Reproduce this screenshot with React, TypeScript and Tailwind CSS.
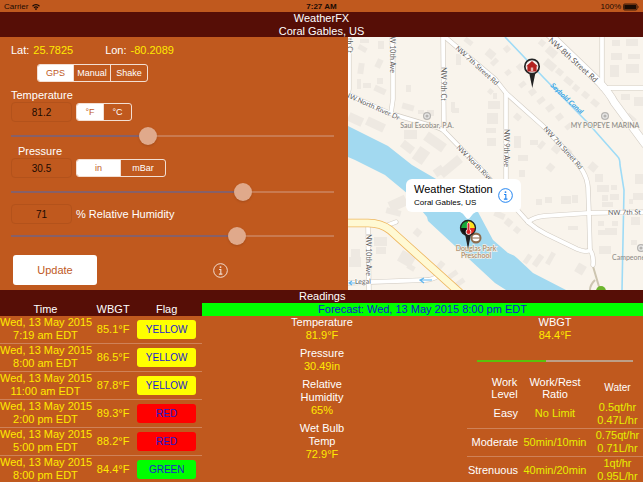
import { useState } from "react";
import { clsx } from "clsx";

type Flag = "YELLOW" | "RED" | "GREEN";

const forecasts: { time: string; wbgt: string; flag: Flag }[] = [
  { time: "7:19 am EDT", wbgt: "85.1°F", flag: "YELLOW" },
  { time: "8:00 am EDT", wbgt: "86.5°F", flag: "YELLOW" },
  { time: "11:00 am EDT", wbgt: "87.8°F", flag: "YELLOW" },
  { time: "2:00 pm EDT", wbgt: "89.3°F", flag: "RED" },
  { time: "5:00 pm EDT", wbgt: "88.2°F", flag: "RED" },
  { time: "8:00 pm EDT", wbgt: "84.4°F", flag: "GREEN" },
];

const flagColors: Record<Flag, string> = {
  YELLOW: "bg-[#ffff00]",
  RED: "bg-[#ff0000]",
  GREEN: "bg-[#00ff00]",
};

const readings = [
  { label: ["Temperature"], value: "81.9°F" },
  { label: ["Pressure"], value: "30.49in" },
  { label: ["Relative", "Humidity"], value: "65%" },
  { label: ["Wet Bulb", "Temp"], value: "72.9°F" },
];

const workLevels = [
  { level: "Easy", ratio: "No Limit", water: ["0.5qt/hr", "0.47L/hr"] },
  { level: "Moderate", ratio: "50min/10min", water: ["0.75qt/hr", "0.71L/hr"] },
  { level: "Strenuous", ratio: "40min/20min", water: ["1qt/hr", "0.95L/hr"] },
];

function StatusBar() {
  return (
    <div className="grid h-3 grid-cols-3 items-center px-1 pt-0.5 text-[8px] leading-[10px] text-[#1a0b04]">
      <div className="flex items-center gap-1">
        <span>Carrier</span>
        <svg className="h-2 w-2" viewBox="0 0 16 14" fill="none" stroke="currentColor" strokeWidth="2.4">
          <path d="M1 5.5C5 1.2 11 1.2 15 5.5" />
          <path d="M4 8.6C6.3 6.2 9.7 6.2 12 8.6" />
          <path d="M8 13.5L5.4 10.6Q8 8.8 10.6 10.6Z" fill="currentColor" stroke="none" />
        </svg>
      </div>
      <span className="text-center font-bold">7:27 AM</span>
      <div className="flex items-center justify-end gap-0.5">
        <span>100%</span>
        <svg className="h-2 w-4" viewBox="0 0 32 16">
          <rect x="1" y="2" width="27" height="12" rx="2.5" fill="none" stroke="currentColor" strokeWidth="1.5" />
          <rect x="2.5" y="3.5" width="24" height="9" fill="currentColor" />
          <path d="M29.5 5Q32.5 8 29.5 11Z" fill="currentColor" />
        </svg>
      </div>
    </div>
  );
}

function Segmented({ label, options, widths }: { label: string; options: string[]; widths: string[] }) {
  const [active, setActive] = useState(options[0]);
  return (
    <div role="group" aria-label={label} className="flex h-[18px] w-fit divide-x divide-[#f3dfd3] overflow-hidden rounded-[3px] border border-[#f3dfd3]">
      {options.map((option, i) => (
        <button
          key={option}
          type="button"
          aria-pressed={active === option}
          onClick={() => setActive(option)}
          className={clsx(
            "flex items-center justify-center text-[9px] leading-none",
            widths[i],
            active === option ? "bg-white text-[#c0591e]" : "text-white"
          )}
        >
          {option}
        </button>
      ))}
    </div>
  );
}

function NumberBox({ id, value }: { id: string; value: string }) {
  return (
    <input
      id={id}
      defaultValue={value}
      inputMode="decimal"
      className="h-5 w-[61px] rounded border border-[#b3521b] bg-transparent text-center text-[10px] text-[#1c0a02] outline-none"
    />
  );
}

function Slider({ label, start }: { label: string; start: number }) {
  const [value, setValue] = useState(start);
  return (
    <div className="relative flex h-5 items-center">
      <div className="flex h-0.5 w-full bg-[#c97a50]">
        <div className="bg-[#866068]" style={{ width: `${value}%` }} />
      </div>
      <input
        type="range"
        aria-label={label}
        min={0}
        max={100}
        value={value}
        onChange={(e) => setValue(Number(e.target.value))}
        className="absolute inset-0 w-full appearance-none bg-transparent [&::-webkit-slider-thumb]:size-[18px] [&::-webkit-slider-thumb]:appearance-none [&::-webkit-slider-thumb]:rounded-full [&::-webkit-slider-thumb]:bg-[#e0a98b] [&::-webkit-slider-thumb]:shadow"
      />
    </div>
  );
}

function InfoIcon({ className }: { className?: string }) {
  return (
    <svg className={className} viewBox="0 0 28 28" fill="none" stroke="currentColor">
      <circle cx="14" cy="14" r="12.8" strokeWidth="1.8" />
      <circle cx="14" cy="7.6" r="1.7" fill="currentColor" stroke="none" />
      <path d="M11.3 12H14.6V20.5M11 20.8H17.6" strokeWidth="2" />
    </svg>
  );
}

function Controls() {
  return (
    <section className="flex flex-col pt-1.5 pr-3.5 pb-[5px] pl-[11px]">
      <div className="flex gap-8 text-[11px] leading-[15px]">
        <p className="flex gap-1 text-white">
          Lat: <span className="text-[#ffea00]">25.7825</span>
        </p>
        <p className="flex gap-1 text-white">
          Lon: <span className="text-[#ffea00]">-80.2089</span>
        </p>
      </div>
      <div className="mt-1.5 ml-[26px]">
        <Segmented label="Location source" options={["GPS", "Manual", "Shake"]} widths={["w-9", "w-[37px]", "w-9"]} />
      </div>

      <label htmlFor="temperature" className="mt-1.5 text-[11px] leading-[14px] text-white">
        Temperature
      </label>
      <div className="flex items-center gap-1">
        <NumberBox id="temperature" value="81.2" />
        <Segmented label="Temperature unit" options={["°F", "°C"]} widths={["w-[27px]", "w-[27px]"]} />
      </div>
      <div className="mt-1">
        <Slider label="Temperature slider" start={42} />
      </div>

      <label htmlFor="pressure" className="-mt-0.5 ml-[7px] text-[11px] leading-[14px] text-white">
        Pressure
      </label>
      <div className="flex items-center gap-1">
        <NumberBox id="pressure" value="30.5" />
        <Segmented label="Pressure unit" options={["in", "mBar"]} widths={["w-11", "w-11"]} />
      </div>
      <div className="mt-1">
        <Slider label="Pressure slider" start={73} />
      </div>

      <div className="mt-0.5 flex items-center gap-1">
        <NumberBox id="humidity" value="71" />
        <label htmlFor="humidity" className="text-[11px] leading-[14px] text-white">
          % Relative Humidity
        </label>
      </div>
      <div className="mt-0.5">
        <Slider label="Humidity slider" start={71} />
      </div>

      <div className="mt-[9px] ml-0.5 flex items-center">
        <button type="button" className="h-[30px] w-[84px] rounded-[3px] bg-white text-[11px] text-[#c0591e]">
          Update
        </button>
        <button type="button" aria-label="Info" className="ml-[116px] text-[#f3dfd3]">
          <InfoIcon className="size-[15px]" />
        </button>
      </div>
    </section>
  );
}

// x, y, width, height, rotation
const buildings = [
  [10, 9, 9, 5, 30], [12, 2, 9, 4, 0], [10, 26, 6, 11, 8], [30, 4, 6, 8, 0], [28, 22, 6, 9, 25],
  [9, 42, 4, 10, 0], [15, 46, 8, 5, 0], [29, 41, 6, 6, 0], [26, 50, 12, 6, 25], [58, 48, 5, 7, 0],
  [54, 67, 12, 6, 15], [70, 73, 6, 4, 0], [79, 73, 7, 6, 0], [108, 17, 5, 11, 0], [103, 65, 4, 10, 0],
  [104, 71, 7, 5, 0], [0, 78, 15, 9, 25], [18, 83, 19, 9, 25], [56, 93, 13, 9, 0], [53, 106, 13, 8, 38],
  [67, 111, 12, 15, 35], [76, 100, 22, 10, 35], [90, 125, 25, 9, -40], [116, 2, 9, 5, 38], [138, 13, 9, 8, 40],
  [140, 52, 5, 5, 40], [140, 64, 12, 8, 0], [139, 76, 11, 11, 0], [138, 91, 10, 5, 0], [139, 101, 9, 8, 0],
  [144, 21, 5, 8, 45], [157, 33, 6, 5, -40], [156, 9, 6, 6, -40], [169, 27, 6, 6, -40], [171, 45, 7, 5, -38],
  [181, 52, 7, 6, -38], [189, 61, 8, 5, -38], [198, 68, 8, 6, -38], [208, 77, 7, 6, -38], [217, 87, 7, 5, -38],
  [191, 3, 6, 6, 40], [198, 11, 11, 8, 42], [196, 24, 12, 8, 40], [208, 32, 7, 6, 40], [216, 41, 9, 6, 40],
  [225, 48, 6, 6, 40], [234, 55, 7, 6, 40], [243, 63, 8, 6, 40], [264, 3, 8, 6, 0], [278, 2, 12, 7, 0],
  [263, 16, 11, 7, 0], [280, 17, 12, 5, 0], [262, 28, 9, 12, 0], [278, 27, 13, 9, 0], [273, 57, 9, 6, 0],
  [286, 60, 9, 9, 0], [277, 78, 10, 9, 40], [145, 56, 4, 6, 0], [166, 77, 7, 6, 42], [182, 103, 8, 5, 0],
  [166, 99, 7, 12, 0], [170, 118, 10, 6, 0], [191, 104, 5, 8, 40], [205, 106, 8, 10, 40], [218, 112, 6, 4, 40],
  [171, 133, 6, 7, 0], [199, 127, 7, 7, 40], [188, 162, 6, 6, 0], [197, 160, 7, 6, 0], [213, 159, 10, 8, 0],
  [224, 158, 6, 8, 0], [241, 126, 8, 8, 40], [247, 137, 8, 8, 0], [249, 148, 12, 7, 0], [263, 148, 6, 5, 0],
  [254, 158, 6, 6, 0], [262, 157, 9, 6, 0], [254, 165, 11, 5, 0], [287, 137, 8, 10, 0], [285, 156, 10, 7, 0],
  [281, 162, 4, 5, 0], [220, 189, 10, 4, 0], [250, 184, 6, 5, 0], [264, 184, 6, 5, 0], [250, 193, 7, 5, 0],
  [257, 191, 12, 7, 0], [251, 209, 12, 8, 0], [283, 180, 9, 8, 0], [283, 203, 6, 5, 0], [177, 217, 5, 10, 35],
  [187, 217, 6, 13, 35], [200, 215, 5, 13, 30], [228, 227, 9, 10, 30], [157, 182, 7, 7, 40], [166, 190, 6, 6, 40],
  [146, 175, 11, 6, 25], [41, 161, 18, 11, -25], [38, 172, 15, 6, 15], [66, 192, 7, 7, 40], [3, 212, 9, 9, 0],
  [1, 220, 12, 10, 0], [26, 200, 13, 9, 0], [28, 210, 10, 7, 0], [51, 216, 15, 12, 30], [59, 228, 8, 5, 30],
  [89, 224, 6, 10, 40], [100, 235, 10, 5, -35], [107, 243, 10, 5, -35], [86, 130, 10, 8, -35], [52, 123, 7, 7, 40],
];

const roads = [
  "M1 0V52L0 57",
  "M44 0L45 30V62L43 76",
  "M95 0L96 94",
  "M-4 55C12 63 28 71 44 77L84 89Q94 91 98 96L130 129L180 185Q188 192 198 197L229 212Q238 216 242 213",
  "M97 0L147 42L158 56L195 89L222 118C234 131 239 139 240 150L241 176L242 213Q246 218 245 228",
  "M158 56V165",
  "M254 -2V48M254 51H297",
  "M180 185Q186 180 196 179L241 176L297 175",
  "M40 188L48 185",
  "M20 188L21 255",
  "M-2 246L77 243Q84 243 90 239",
];

const streetNames: { x: number; y: number; angle: number; text: string; size?: number }[] = [
  { x: -1, y: 1, angle: 90, text: "th Ct" },
  { x: 42, y: -6, angle: 90, text: "NW 10th Ave" },
  { x: 93, y: 30, angle: 90, text: "NW 9th Ct" },
  { x: -4, y: 59, angle: 24, text: "NW North River Dr" },
  { x: 107, y: 12, angle: 42, text: "NW 7th Street Rd" },
  { x: 108, y: 111, angle: 45, text: "NW North River Dr" },
  { x: 200, y: 4, angle: 42, text: "NW 8th Street Rd", size: 8 },
  { x: 195, y: 92, angle: 48, text: "NW 7th Street Rd" },
  { x: 156, y: 92, angle: 90, text: "NW 9th Ave" },
  { x: 260, y: 178, angle: -1, text: "NW 7th St" },
  { x: 18, y: 197, angle: 90, text: "NW 10th Ave" },
  { x: 7, y: 247, angle: -1, text: "Legal" },
];

function Poi({ x, y, label }: { x: number; y: number; label?: string }) {
  return (
    <g>
      <circle cx={x} cy={y} r="4" fill="#b5b3b0" />
      <circle cx={x} cy={y} r="2.2" fill="none" stroke="#fff" strokeOpacity="0.7" strokeWidth="1.2" />
      {label && (
        <text x={x} y={y + 12} textAnchor="middle" fontSize="7" fontWeight="500" fill="#8b8985" stroke="#faf5ec" strokeWidth="1.5" paintOrder="stroke">
          {label}
        </text>
      )}
    </g>
  );
}

function MapPanel() {
  return (
    <section aria-label="Map" className="relative overflow-hidden bg-[#f9f4ec]">
      <svg className="absolute inset-0 size-full font-['Lato',sans-serif]" viewBox="0 0 295 253" preserveAspectRatio="xMidYMid slice">
        <g fill="#eee9e2">
          {buildings.map(([x, y, w, h, r], i) => (
            <rect key={i} x={x} y={y} width={w} height={h} transform={`rotate(${r} ${x + w / 2} ${y + h / 2})`} />
          ))}
        </g>

        {/* River and canal */}
        <path
          d="M0 89L40 109L64 128L95 146L130 175L145 203L160 216Q166 218 169 221L185 236L218 253H158L147 246L80 184L79 180L60 157L37 138L7 123L0 120Z"
          fill="#a2d9f0"
        />
        <path d="M157 0L196 41L240 86L270 120Q272 122 272 128L276 153L274 253" fill="none" stroke="#9edbf6" strokeWidth="1.6" />

        {/* Streets */}
        <path d="M244 226L252 253M247 243Q242 248 242 253" fill="none" stroke="#cdc5b0" strokeWidth="2" />
        <g fill="none" stroke="#d3cdc4" strokeWidth="5" strokeLinecap="round">
          {roads.map((d) => (
            <path key={d} d={d} />
          ))}
          <path d="M200 -4L252 46Q262 57 266 65L297 107" strokeWidth="8.5" />
        </g>
        <g fill="none" stroke="#fff" strokeWidth="3.8" strokeLinecap="round">
          {roads.map((d) => (
            <path key={d} d={d} />
          ))}
          <path d="M200 -4L252 46Q262 57 266 65L297 107" strokeWidth="7.2" />
        </g>
        <g fill="none">
          <path d="M-3 186H20Q33 186 42 193L112 256" stroke="#eeb65f" strokeWidth="8.6" />
          <path d="M-3 186H20Q33 186 42 193L112 256" stroke="#fff9d3" strokeWidth="7" />
        </g>
        <path d="M9 246H2M4 244L1 246L4 248M84 243H73M76 241L72 243L76 246" fill="none" stroke="#62b6ee" strokeWidth="1.2" />

        {streetNames.map(({ x, y, angle, text, size = 7 }, i) => (
          <text key={i} transform={`translate(${x} ${y}) rotate(${angle})`} fontSize={size} fill="#5f5d5a" stroke="#fff" strokeWidth="1" paintOrder="stroke">
            {text}
          </text>
        ))}
        <text transform="translate(202 49) rotate(43)" fontSize="7" fontStyle="italic" fontWeight="700" fill="#35a4e6">
          Seybold Canal
        </text>

        <Poi x={79} y={79} label="Saul Escobar, P.A." />
        <Poi x={257} y={79} label="MY POPEYE MARINA" />
        <Poi x={293} y={211} />
        <text x="264" y="223" fontSize="7" fill="#8b8985">
          Campeones
        </text>
        <circle cx="253" cy="254" r="5" fill="#6cb52d" />

        {/* Preschool marker */}
        <circle cx="128" cy="201" r="5.5" fill="#8e6d4e" />
        <ellipse cx="128" cy="201" rx="3.6" ry="3.2" fill="#fff" />
        <path d="M124 201H132" stroke="#8e6d4e" strokeWidth="1" />
        <g textAnchor="middle" fontSize="7" fill="#a07e59" stroke="#f6f1e8" strokeWidth="1.4" paintOrder="stroke">
          <text x="128" y="214">Douglas Park</text>
          <text x="128" y="221">Preschool</text>
        </g>

        {/* Home pin */}
        <path d="M181 35L184.300 51L187.600 35Z" fill="#222" />
        <circle cx="184" cy="29.500" r="7.200" fill="#f6f0ee" stroke="#242424" strokeWidth="1.700" />
        <path d="M178.200 29.200L184 24L189.800 29.200H188.600V34.400H179.400V29.200Z" fill="#b3211f" />
        <path d="M182.800 34V30.500H185.200V34Z" fill="#e6b3ae" />

        {/* Weather station pin */}
        <path d="M117 197L120 212L123 197Z" fill="#222" />
        <circle cx="120" cy="191" r="7.500" fill="#ffdf1f" />
        <path d="M120 191V183.500A7.500 7.500 0 0 0 112.500 191Z" fill="#18a83a" />
        <path d="M120 191H112.500A7.500 7.500 0 0 0 120 198.500Z" fill="#111" />
        <path d="M120 191H127.500A7.500 7.500 0 0 1 120 198.500Z" fill="#e62a22" />
        <circle cx="120" cy="191" r="7.500" fill="none" stroke="#222" strokeWidth="1.300" />
        <path d="M120.500 187V195" stroke="#fff" strokeWidth="3.200" strokeLinecap="round" />
        <circle cx="120.500" cy="195" r="2.800" fill="#fff" />
        <path d="M120.500 187V195" stroke="#d9252a" strokeWidth="2" strokeLinecap="round" />
        <circle cx="120.500" cy="195" r="2.100" fill="#d9252a" />
      </svg>

      {/* Callout over the station pin */}
      <div className="absolute top-[142px] left-[58px] flex h-[33px] w-[115px] items-center justify-between rounded-md bg-white px-2">
        <div className="whitespace-nowrap text-black">
          <p className="text-[11px] leading-[15px]">Weather Station</p>
          <p className="text-[8px] leading-[12px]">Coral Gables, US</p>
        </div>
        <button type="button" aria-label="Station details" className="text-[#1a80f0]">
          <InfoIcon className="size-[15px]" />
        </button>
        <svg className="absolute top-full left-[54px] h-2 w-4" viewBox="0 0 16 8">
          <path d="M0 0H16Q13 1 10.500 5Q8 9 5.500 5Q3 1 0 0Z" fill="#fff" />
        </svg>
      </div>
    </section>
  );
}

function ForecastTable() {
  return (
    <table className="h-full w-full table-fixed border-collapse text-center text-[11px] leading-[13px]">
      <colgroup>
        <col className="w-[45%]" />
        <col className="w-[22%]" />
        <col className="w-[33%]" />
      </colgroup>
      <thead className="bg-[#560e06] text-white">
        <tr className="h-[26px] align-bottom">
          <th className="font-normal">Time</th>
          <th className="font-normal">WBGT</th>
          <th className="pr-1 font-normal">Flag</th>
        </tr>
      </thead>
      <tbody className="text-[#ffea00]">
        {forecasts.map(({ time, wbgt, flag }) => (
          <tr key={time} className="border-b border-[#cf8258]">
            <td className="whitespace-nowrap">
              Wed, 13 May 2015
              <br />
              {time}
            </td>
            <td>{wbgt}</td>
            <td className="pr-1.5 pl-0.5">
              <button type="button" className={clsx("block h-[19px] w-full rounded-[3px] text-[10px] text-[#1c1ccf]", flagColors[flag])}>
                {flag}
              </button>
            </td>
          </tr>
        ))}
      </tbody>
    </table>
  );
}

function WorkTable() {
  return (
    <table className="mt-3.5 w-full table-fixed border-collapse text-center">
      <colgroup>
        <col className="w-[29%]" />
        <col className="w-[42%]" />
        <col className="w-[29%]" />
      </colgroup>
      <thead className="leading-[12px]">
        <tr>
          <th className="pl-6 font-normal">Work Level</th>
          <th className="font-normal">
            Work/Rest
            <br />
            Ratio
          </th>
          <th className="text-[10px] font-normal">Water</th>
        </tr>
      </thead>
      <tbody className="text-[#e6ee00]">
        {workLevels.map(({ level, ratio, water }) => (
          <tr key={level} className="h-7 border-b border-[#cf8258] last:border-0">
            <td className="text-right text-white">{level}</td>
            <td className="whitespace-nowrap">{ratio}</td>
            <td className="whitespace-nowrap">
              {water[0]}
              <br />
              {water[1]}
            </td>
          </tr>
        ))}
      </tbody>
    </table>
  );
}

function Readings() {
  return (
    <section className="flex flex-col">
      <h2 className="bg-[#560e06] pl-[97px] text-[11px] leading-[13px] text-white">Readings</h2>
      <p className="bg-[#00ff00] text-center text-[11px] leading-[13px] text-[#1414d2]">
        Forecast: Wed, 13 May 2015 8:00 pm EDT
      </p>
      <div className="flex flex-1 justify-between text-[11px] leading-[13px] text-white">
        <dl className="flex w-60 flex-col gap-[5px] text-center">
          {readings.map(({ label, value }) => (
            <div key={value}>
              <dt>
                {label.map((line) => (
                  <span key={line} className="block">
                    {line}
                  </span>
                ))}
              </dt>
              <dd className="text-[#ffea00]">{value}</dd>
            </div>
          ))}
        </dl>
        <div className="flex w-[176px] flex-col">
          <p className="text-center">
            WBGT
            <span className="block text-[#ffea00]">84.4°F</span>
          </p>
          <div className="mx-2.5 mt-[18px] flex h-0.5 bg-[#bd9f87]">
            <div className="h-full w-[44%] bg-[#59c20b]" />
          </div>
          <WorkTable />
        </div>
      </div>
    </section>
  );
}

export default function App() {
  return (
    <main className="flex h-screen flex-col overflow-hidden bg-[#c0591e] font-['Liberation_Sans',Arial,sans-serif]">
      <StatusBar />
      <header className="bg-[#560e06] text-center text-[11px] leading-[12px] text-white">
        <h1>WeatherFX</h1>
        <p className="pt-px">Coral Gables, US</p>
      </header>
      <div className="grid grid-cols-[348fr_295fr]">
        <Controls />
        <MapPanel />
      </div>
      <div className="grid flex-1 grid-cols-[202fr_441fr]">
        <ForecastTable />
        <Readings />
      </div>
    </main>
  );
}
